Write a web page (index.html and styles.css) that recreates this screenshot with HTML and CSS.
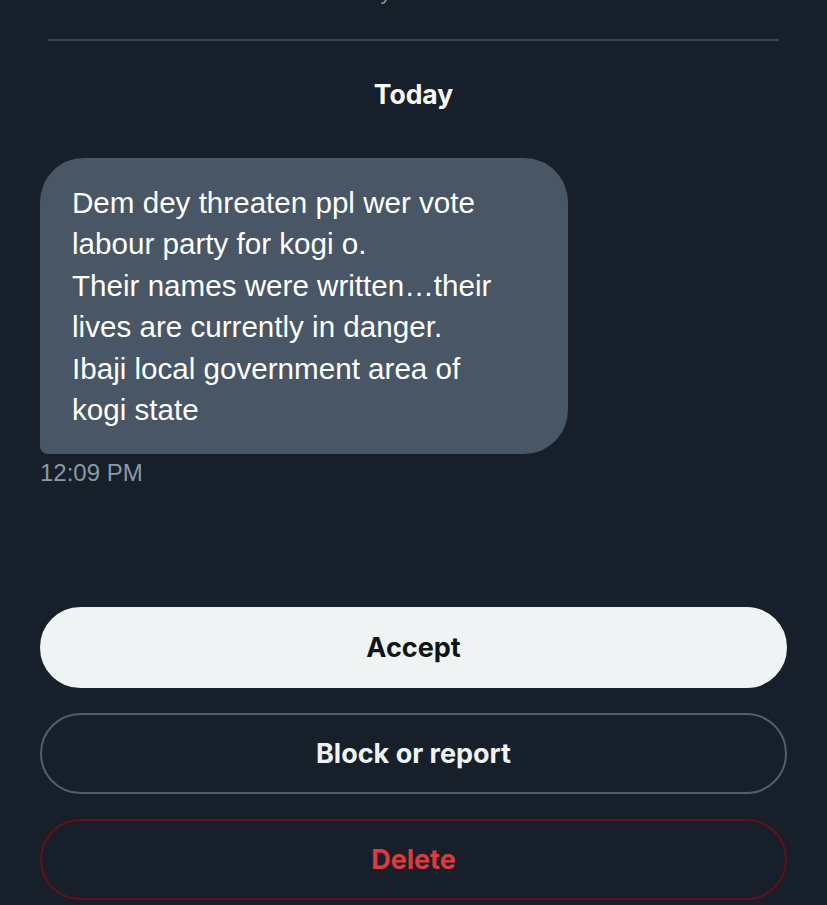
FILE: index.html
```html
<!DOCTYPE html>
<html lang="en">
<head>
    <meta charset="UTF-8">
    <title>Message request</title>
    <link rel="stylesheet" href="styles.css">
</head>
<body>
<div class="page">
    <div class="notice">This chat is only visible to the sender</div>
    <div class="divider"></div>

    <div class="day">Today</div>

    <div class="message">
        <div class="bubble">
            Dem dey threaten ppl wer vote<br>
            labour party for kogi o.<br>
            Their names were written…their<br>
            lives are currently in danger.<br>
            Ibaji local government area of<br>
            kogi state
        </div>
        <div class="time">12:09 PM</div>
    </div>

    <div class="actions">
        <button class="btn accept">Accept</button>
        <button class="btn block">Block or report</button>
        <button class="btn delete">Delete</button>
    </div>
</div>
</body>
</html>
```

FILE: styles.css
```css
* {
    margin: 0;
    padding: 0;
    box-sizing: border-box;
}

html, body {
    background-color: #171f2a;
    height: 100%;
    overflow: hidden;
}

body {
    font-family: "Liberation Sans", Arial, sans-serif;
    color: #f7f9f9;
}

.page {
    width: 827px;
    height: 905px;
}

/* the line above is scrolled mostly out of view */
.notice {
    height: 22px;
    margin-top: -19px;
    font-size: 22px;
    line-height: 22px;
    color: #8b98a5;
    text-align: center;
}

.divider {
    height: 2px;
    margin: 36px 48px 0;
    background-color: #3a444f;
}

.day {
    margin-top: 38px;
    font-family: Inter, Roboto, sans-serif;
    font-weight: bold;
    font-size: 26.5px;
    line-height: 30px;
    text-align: center;
}

.message {
    margin: 49px 0 0 40px;
}

.bubble {
    display: inline-block;
    width: 528px;
    padding: 24px 20px 24px 32px;
    background-color: #485665;
    border-radius: 44px 44px 44px 8px;
    font-size: 29.6px;
    line-height: 41.4px;
    color: #ffffff;
    white-space: nowrap;
}

.time {
    margin-top: 4px;
    font-size: 24px;
    line-height: 30px;
    color: #8b98a5;
}

.actions {
    display: flex;
    flex-direction: column;
    gap: 25px;
    margin: 119px 40px 0;
}

.btn {
    height: 81px;
    border-radius: 41px;
    font-family: Inter, Roboto, sans-serif;
    font-weight: bold;
    font-size: 27px;
    background: transparent;
    border: 2px solid #525e6b;
    color: #eff3f4;
}

.accept {
    background-color: #eff3f4;
    border-color: #eff3f4;
    color: #0f1419;
}

.delete {
    border-color: #67101c;
    color: #e0393e;
}
```
